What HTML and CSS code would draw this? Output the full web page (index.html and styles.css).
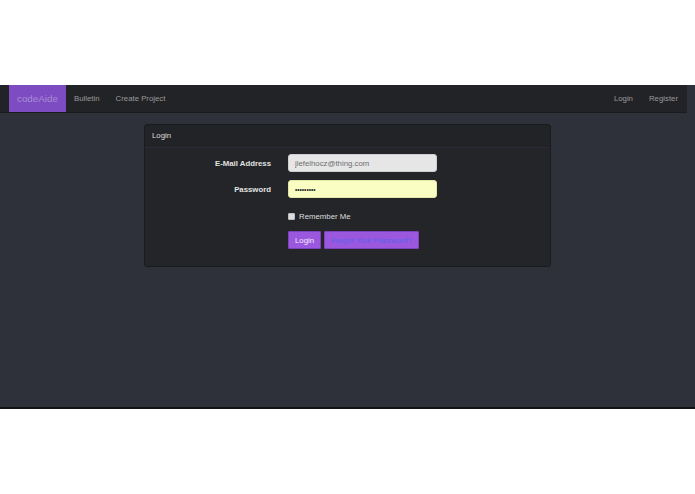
FILE: index.html
```html
<!DOCTYPE html>
<html lang="en">

<head>
    <meta charset="UTF-8">
    <meta name="viewport" content="width=device-width, initial-scale=1.0">
    <title>codeAide - Login</title>
    <link rel="stylesheet" href="styles.css">
</head>

<body>
    <div class="screen">
        <nav class="navbar">
            <a class="brand" href="#">codeAide</a>
            <div class="nav-links">
                <a href="#">Bulletin</a>
                <a href="#">Create Project</a>
            </div>
            <div class="nav-links nav-right">
                <a href="#">Login</a>
                <a href="#">Register</a>
            </div>
        </nav>

        <div class="card">
            <div class="card-header">Login</div>
            <div class="card-body">
                <div class="form-row">
                    <label for="email">E-Mail Address</label>
                    <input type="text" id="email" class="field" value="jlefelhocz@thing.com">
                </div>
                <div class="form-row">
                    <label for="password">Password</label>
                    <input type="password" id="password" class="field autofill" value="*********">
                </div>
                <div class="offset remember">
                    <input type="checkbox" id="remember" class="check">
                    <label for="remember">Remember Me</label>
                </div>
                <div class="offset actions">
                    <button class="btn">Login</button>
                    <button class="btn btn-link">Forgot Your Password?</button>
                </div>
            </div>
        </div>
    </div>
</body>

</html>
```

FILE: styles.css
```css
body {
    margin: 0;
    background-color: #ffffff;
    font-family: "Liberation Sans", Arial, sans-serif;
    font-size: 7.8px;
}

.screen {
    margin-top: 85px;
    height: 322px;
    background-color: #2e313a;
    border-bottom: 2px solid #121316;
    overflow: hidden;
}

.navbar {
    display: flex;
    align-items: stretch;
    width: 678px;
    height: 27px;
    padding-left: 9px;
    background-color: #222326;
    border-bottom: 1px solid #1b1c1f;
}

.navbar a {
    color: #9a9a9a;
    text-decoration: none;
}

.brand {
    display: flex;
    align-items: center;
    padding: 0 8px;
    width: 41px;
    background-color: #7d4cc2;
    color: #a88bd6 !important;
    font-size: 9.8px;
}

.nav-links {
    display: flex;
    align-items: center;
    gap: 16px;
    margin-left: 8px;
}

.nav-right {
    margin-left: auto;
    margin-right: 9px;
    gap: 16px;
}

.card {
    width: 405px;
    margin: 11px auto 0;
    background-color: #242528;
    border: 1px solid #1a1b1e;
    border-radius: 3px;
}

.card-header {
    height: 22px;
    line-height: 22px;
    padding-left: 7px;
    color: #dcdcdc;
    background-color: #222326;
    border-bottom: 1px solid #2d2838;
    border-radius: 3px 3px 0 0;
}

.card-body {
    padding: 6px 0 17px;
}

.form-row {
    display: grid;
    grid-template-columns: 126px 149px;
    column-gap: 17px;
    align-items: center;
    margin-bottom: 8px;
}

.form-row label {
    text-align: right;
    color: #e2e2e2;
    font-weight: bold;
}

.field {
    box-sizing: border-box;
    height: 18px;
    padding: 0 6px;
    border: 1px solid #cfcfcf;
    border-radius: 3px;
    background-color: #e6e6e6;
    color: #6e6e6e;
    font-family: inherit;
    font-size: 7.8px;
}

.autofill {
    background-color: #fbfec3;
    border-color: #e4e6a8;
    color: #222;
    font-size: 6.5px;
}

.offset {
    margin-left: 143px;
    display: flex;
    align-items: center;
}

.remember {
    margin-top: 14px;
    gap: 4px;
    color: #dedede;
}

.check {
    appearance: none;
    margin: 0;
    width: 7px;
    height: 7px;
    background-color: #dcdcdc;
    border: 1px solid #bdbdbd;
    border-radius: 1px;
}

.actions {
    margin-top: 10px;
    gap: 3px;
}

.btn {
    height: 18px;
    padding: 0 6px;
    background-color: #9b57de;
    border: 1px solid #7c43bd;
    border-radius: 1px;
    color: #f2eafb;
    font-family: inherit;
    font-size: 7.8px;
}

.btn-link {
    color: #5a63ea;
}
```
